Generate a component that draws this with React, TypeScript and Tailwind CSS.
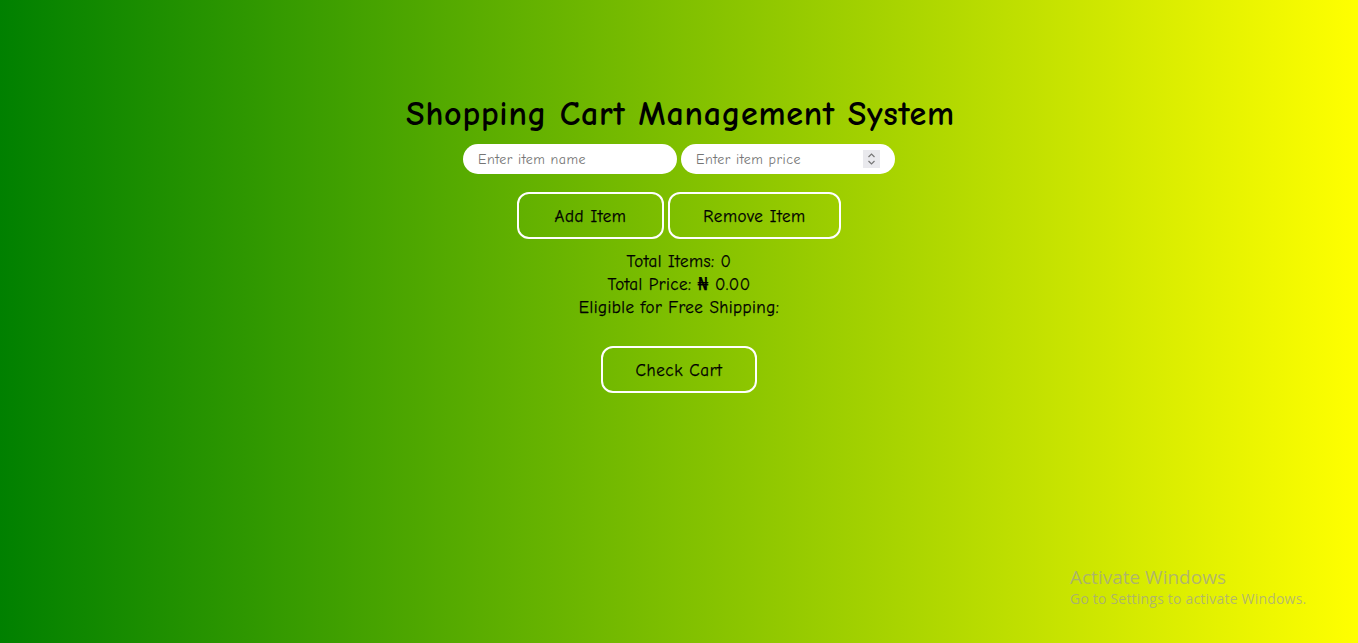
import { useState } from "react";

const font = { fontFamily: '"Comic Sans MS", "Comic Neue", "DejaVu Sans", sans-serif' };

export default function App() {
  const [name, setName] = useState("");
  const [price, setPrice] = useState("");

  return (
    <div
      className="relative min-h-[643px] w-full overflow-hidden bg-[linear-gradient(to_right,#008000,#ffff00)] text-black"
      style={font}
    >
      <main className="flex flex-col items-center pt-[92px]">
        <h1 className="pl-[3px] text-[34px] font-bold leading-[44px] tracking-[0.75px]">Shopping Cart Management System</h1>

        {/* INPUTS */}
        <div className="mt-[8px] flex gap-[4px]">
          <input
            value={name}
            onChange={(e) => setName(e.target.value)}
            placeholder="Enter item name"
            className="h-[30px] w-[214px] rounded-full bg-white px-[15px] text-[14px] tracking-[0.5px] outline-none placeholder:text-[#757575]"
          />
          <div className="relative">
            <input
              value={price}
              onChange={(e) => setPrice(e.target.value)}
              placeholder="Enter item price"
              className="h-[30px] w-[214px] rounded-full bg-white px-[15px] text-[14px] tracking-[0.5px] outline-none placeholder:text-[#757575]"
            />
            <span className="absolute right-[15px] top-[6px] flex h-[18px] w-[17px] flex-col items-center justify-center bg-[#e9e9ed]">
              <svg width="9" height="14" viewBox="0 0 9 14" fill="none" stroke="#777" strokeWidth="1.2">
                <path d="M1.5 5 L4.5 2 L7.5 5" />
                <path d="M1.5 9 L4.5 12 L7.5 9" />
              </svg>
            </span>
          </div>
        </div>

        {/* ACTIONS */}
        <div className="mt-[18px] flex gap-[4px] [-webkit-text-stroke:0.25px_black]">
          <button className="h-[47px] w-[147px] rounded-[12px] border-2 border-white pt-[3px] text-[17px] tracking-[0.6px]">Add Item</button>
          <button className="h-[47px] w-[173px] rounded-[12px] border-2 border-white pt-[3px] text-[17px] tracking-[0.6px]">Remove Item</button>
        </div>

        {/* SUMMARY */}
        <div className="mt-[11px] flex flex-col items-center text-[17px] leading-[23px] tracking-[0.45px] [-webkit-text-stroke:0.25px_black]">
          <p>Total Items: 0</p>
          <p>Total Price: ₦ 0.00</p>
          <p>Eligible for Free Shipping: </p>
        </div>

        <button className="mt-[27px] h-[47px] w-[156px] rounded-[12px] border-2 border-white pt-[3px] text-[17px] tracking-[0.6px] [-webkit-text-stroke:0.25px_black]">Check Cart</button>
      </main>

      <div className="pointer-events-none absolute left-[1070px] top-[565px] text-[#9c9c9c]/70" style={{ fontFamily: '"Open Sans", "Noto Sans", sans-serif' }}>
        <p className="text-[19px] leading-[24px]">Activate Windows</p>
        <p className="text-[14px] leading-[20px] tracking-[0.2px]">Go to Settings to activate Windows.</p>
      </div>
    </div>
  );
}
